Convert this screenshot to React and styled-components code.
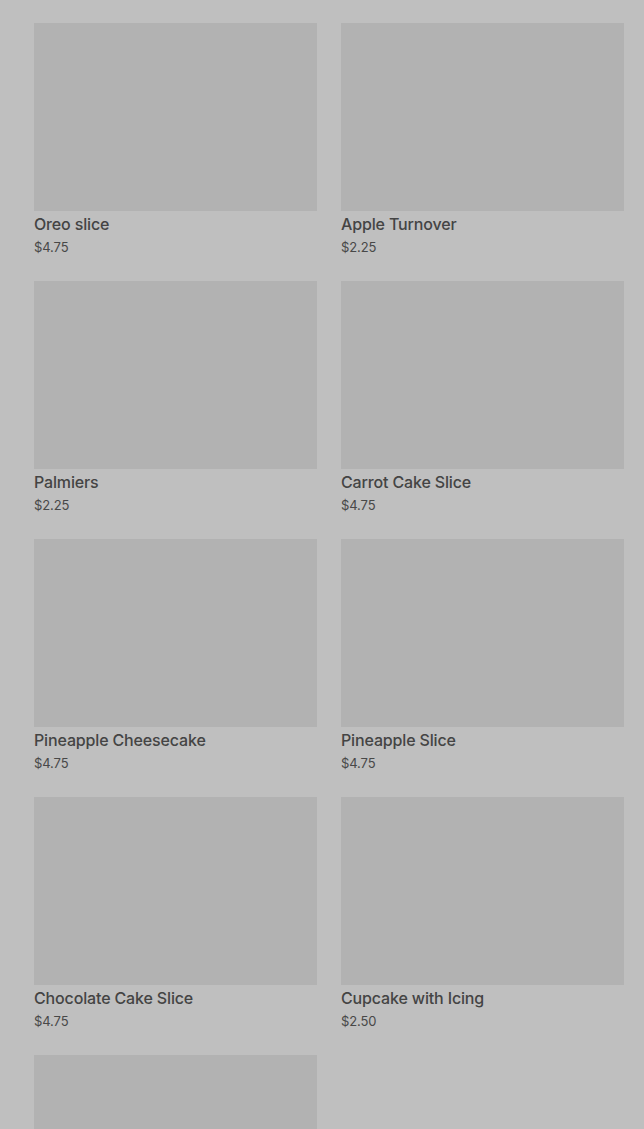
import React from 'react';
import styled, { createGlobalStyle } from 'styled-components';

const GlobalStyle = createGlobalStyle`
  html, body {
    margin: 0;
    padding: 0;
    background: #bfbfbf;
  }
  body {
    font-family: Inter, Roboto, "Noto Sans", Arial, sans-serif;
  }
`;

const Grid = styled.div`
  display: grid;
  grid-template-columns: 283px 283px;
  column-gap: 24px;
  row-gap: 24px;
  padding: 23px 20px 0 34px;
`;

const Card = styled.div`
  display: flex;
  flex-direction: column;
`;

const Thumb = styled.div`
  height: 188px;
  background: #b2b2b2;
`;

const Title = styled.div`
  margin-top: 3px;
  font-size: 16px;
  line-height: 20px;
  font-weight: 500;
  letter-spacing: -0.15px;
  color: #444;
`;

const Price = styled.div`
  margin-top: 3px;
  font-size: 13px;
  line-height: 20px;
  letter-spacing: -0.1px;
  color: #484848;
`;

const items = [
  { name: 'Oreo slice', price: '$4.75' },
  { name: 'Apple Turnover', price: '$2.25' },
  { name: 'Palmiers', price: '$2.25' },
  { name: 'Carrot Cake Slice', price: '$4.75' },
  { name: 'Pineapple Cheesecake', price: '$4.75' },
  { name: 'Pineapple Slice', price: '$4.75' },
  { name: 'Chocolate Cake Slice', price: '$4.75' },
  { name: 'Cupcake with Icing', price: '$2.50' },
  { name: 'Lamington', price: '$3.50' },
];

const App = () => {
  return (
    <>
      <GlobalStyle />
      <Grid>
        {items.map((item) => (
          <Card key={item.name}>
            <Thumb />
            <Title>{item.name}</Title>
            <Price>{item.price}</Price>
          </Card>
        ))}
      </Grid>
    </>
  );
};

export default App;
